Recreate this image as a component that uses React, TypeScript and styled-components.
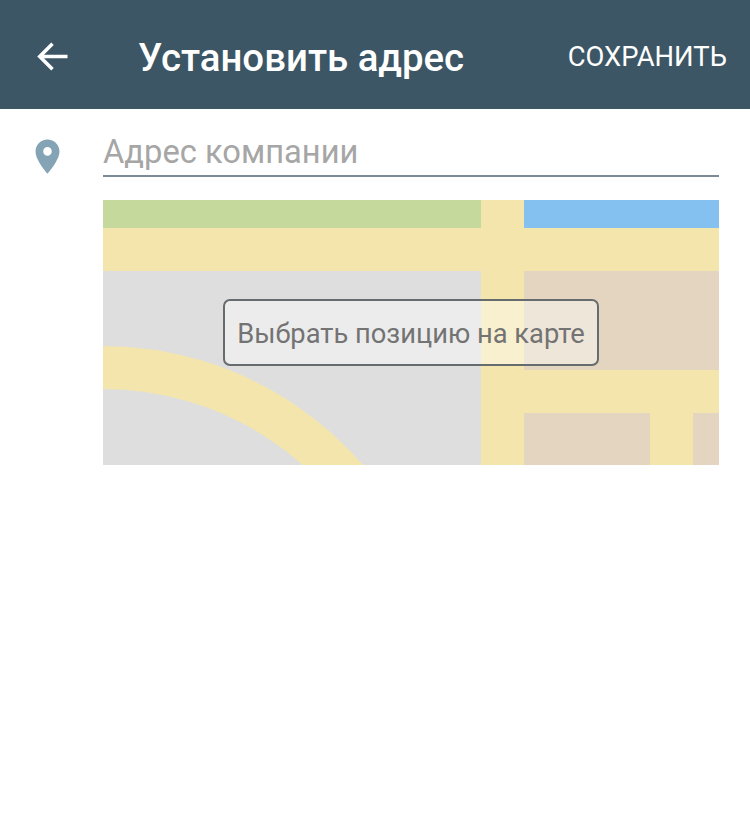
import React, { FC } from 'react';

import styled, { createGlobalStyle } from 'styled-components';

const GlobalStyle = createGlobalStyle`
  html,
  body {
    margin: 0;
    padding: 0;
    background: #fff;
    font-family: Roboto, "Liberation Sans", sans-serif;
  }
`;

const App: FC = () => {
  return (
    <Page>
      <GlobalStyle />
      {/* header */}
      <Header>
        <BackIcon viewBox="0 0 24 24">
          <path d="M20 12H5.2M12 5.2L5.2 12l6.8 6.8" />
        </BackIcon>
        <Title>Установить адрес</Title>
        <SaveButton>СОХРАНИТЬ</SaveButton>
      </Header>
      {/* content */}
      <Content>
        <PinIcon viewBox="0 0 24 24">
          <path d="M12 2C8.13 2 5 5.13 5 9c0 5.25 7 13 7 13s7-7.75 7-13c0-3.87-3.13-7-7-7zm0 9.5c-1.38 0-2.5-1.12-2.5-2.5s1.12-2.5 2.5-2.5 2.5 1.12 2.5 2.5-1.12 2.5-2.5 2.5z" />
        </PinIcon>
        <Column>
          <AddressInput placeholder="Адрес компании" />
          <MapBox>
            <MapDrawing viewBox="0 0 616 265">
              <rect width="616" height="265" fill="#f3e5ab" />
              <rect width="378" height="28" fill="#c5d99c" />
              <rect x="421" width="195" height="28" fill="#84c1f0" />
              <rect y="71" width="378" height="194" fill="#dedede" />
              <rect x="421" y="71" width="195" height="99" fill="#e3d5bf" />
              <rect x="421" y="213" width="126" height="52" fill="#e3d5bf" />
              <rect x="590" y="213" width="26" height="52" fill="#e3d5bf" />
              <path d="M0 167.5A322 322 0 0 1 300 372.5" fill="none" stroke="#f3e5ab" strokeWidth="43" />
            </MapDrawing>
            <PickButton>Выбрать позицию на карте</PickButton>
          </MapBox>
        </Column>
      </Content>
    </Page>
  );
};

const Page = styled.div`
  width: 750px;
  height: 821px;
  overflow: hidden;
  background: #fff;
`;

const Header = styled.header`
  height: 109px;
  display: flex;
  align-items: center;
  padding: 0 23px 0 30px;
  box-sizing: border-box;
  background-color: #3c5665;
  color: #fff;
`;

const BackIcon = styled.svg`
  width: 45px;
  height: 45px;
  flex: none;
  margin-top: 3px;
  fill: none;
  stroke: #fff;
  stroke-width: 1.9;
`;

const Title = styled.h1`
  margin: 6px 0 0 63px;
  font-size: 38.4px;
  font-weight: 500;
  line-height: 40px;
  white-space: nowrap;
`;

const SaveButton = styled.span`
  margin: 4px 0 0 auto;
  font-size: 27.4px;
  font-weight: 400;
  line-height: 30px;
  white-space: nowrap;
`;

const Content = styled.main`
  display: grid;
  grid-template-columns: 103px 616px;
`;

const PinIcon = styled.svg`
  width: 41px;
  height: 41px;
  margin: 27px 0 0 27px;
  fill: #84a3b5;
`;

const Column = styled.div`
  display: flex;
  flex-direction: column;
  padding-top: 23px;
`;

const AddressInput = styled.input`
  width: 100%;
  height: 45px;
  padding: 0 0 4px 0;
  box-sizing: border-box;
  border: none;
  border-bottom: 2px solid #7b8a94;
  outline: none;
  background: transparent;
  font-family: Roboto, "Liberation Sans", sans-serif;
  font-size: 32.7px;
  color: #333;

  &::placeholder {
    color: #a6a6a6;
    opacity: 1;
  }
`;

const MapBox = styled.div`
  position: relative;
  height: 265px;
  margin-top: 23px;
`;

const MapDrawing = styled.svg`
  display: block;
  width: 616px;
  height: 265px;
`;

const PickButton = styled.button`
  position: absolute;
  top: 99px;
  left: 120px;
  width: 376px;
  height: 67px;
  padding: 2px 0 0;
  box-sizing: border-box;
  border: 2px solid #666b6e;
  border-radius: 7px;
  background: rgba(255, 255, 255, 0.42);
  font-family: Roboto, "Liberation Sans", sans-serif;
  font-size: 27.3px;
  color: #737373;
  white-space: nowrap;
`;

export default App;
